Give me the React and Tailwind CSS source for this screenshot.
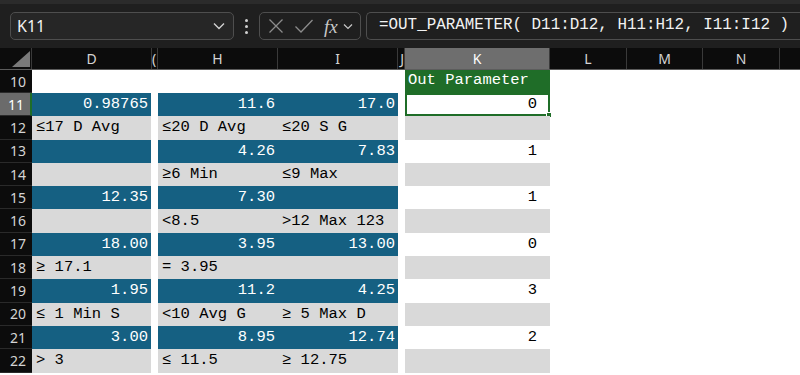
import React from 'react';

const MONO = { fontFamily: '"Liberation Mono", "DejaVu Sans Mono", monospace' };
const UI = { fontFamily: '"Noto Sans", "Open Sans", sans-serif' };

const rows = [
  { n: 11, d: '0.98765', h: '11.6', i: '17.0', k: '0' },
  { n: 12, d: '≤17 D Avg', h: '≤20 D Avg', i: '≤20 S G' },
  { n: 13, d: '', h: '4.26', i: '7.83', k: '1' },
  { n: 14, d: '', h: '≥6 Min', i: '≤9 Max' },
  { n: 15, d: '12.35', h: '7.30', i: '', k: '1' },
  { n: 16, d: '', h: '<8.5', i: '>12 Max 123' },
  { n: 17, d: '18.00', h: '3.95', i: '13.00', k: '0' },
  { n: 18, d: '≥ 17.1', h: '= 3.95', i: '' },
  { n: 19, d: '1.95', h: '11.2', i: '4.25', k: '3' },
  { n: 20, d: '≤ 1 Min S', h: '<10 Avg G', i: '≥ 5 Max D' },
  { n: 21, d: '3.00', h: '8.95', i: '12.74', k: '2' },
  { n: 22, d: '> 3', h: '≤ 11.5', i: '≥ 12.75' },
];

const cols = [
  { l: 'D', w: 'w-[120px]' },
  { l: 'G', w: 'w-[6px]', align: 'justify-start' },
  { l: 'H', w: 'w-[120px]' },
  { l: 'I', w: 'w-[120px]' },
  { l: 'J', w: 'w-[7px]', align: 'justify-end' },
  { l: 'K', w: 'w-[145px]', sel: true },
  { l: 'L', w: 'w-[77px]' },
  { l: 'M', w: 'w-[76px]' },
  { l: 'N', w: 'w-[77px]' },
  { l: '', w: 'w-[40px]' },
];

function RowHead({ n, sel }) {
  return (
    <div
      className={`w-[32px] shrink-0 h-full flex items-center justify-end pr-[6px] text-[14px] border-b border-[#2a2a2a] ${sel ? 'bg-[#6b6b6b] text-white border-r-2 border-r-[#1f6d28]' : 'bg-[#0c0c0c] text-[#d4d4d4]'}`}
      style={UI}
    >
      {n}
    </div>
  );
}

function Cell({ text, dark, w }) {
  const bg = dark ? 'bg-[#156082] text-white' : 'bg-[#d9d9d9] text-black';
  return (
    <div
      className={`${w} shrink-0 h-full flex items-center whitespace-nowrap overflow-hidden text-[15.5px] ${bg} ${dark ? 'justify-end pr-[3px]' : 'justify-start pl-[4px]'}`}
      style={MONO}
    >
      {text}
    </div>
  );
}

export default function App() {
  return (
    <div className="w-[800px] h-[375px] overflow-hidden bg-white relative">
      {/* formula bar */}
      <div className="h-[48px] bg-[#1f1f1f] border-t-[4px] border-[#2b2b2b] flex items-center pl-[10px]">
        <div className="w-[224px] h-[28px] rounded-[5px] border border-[#4e4e4e] bg-[#262626] flex items-center justify-between pl-[6px] pr-[8px]">
          <span className="text-[16px] text-[#f2f2f2]" style={UI}>K11</span>
          <svg width="12" height="8" viewBox="0 0 12 8">
            <path d="M1 1.5 L6 6.5 L11 1.5" stroke="#d0d0d0" strokeWidth="1.4" fill="none" />
          </svg>
        </div>
        <div className="w-[25px] flex flex-col items-center gap-[3px]">
          <div className="w-[3px] h-[3px] rounded-full bg-[#d0d0d0]" />
          <div className="w-[3px] h-[3px] rounded-full bg-[#d0d0d0]" />
          <div className="w-[3px] h-[3px] rounded-full bg-[#d0d0d0]" />
        </div>
        <div className="w-[102px] h-[28px] rounded-[5px] border border-[#4e4e4e] flex items-center pl-[8px]">
          <svg width="16" height="16" viewBox="0 0 16 16">
            <path d="M1.5 1.5 L14.5 14.5 M14.5 1.5 L1.5 14.5" stroke="#8c8c8c" strokeWidth="1.3" fill="none" />
          </svg>
          <svg width="20" height="16" viewBox="0 0 20 16" className="ml-[10px]">
            <path d="M1.5 8.5 L7 14 L18.5 2" stroke="#8c8c8c" strokeWidth="1.3" fill="none" />
          </svg>
          <span className="ml-[10px] text-[19px] italic text-[#c8c8c8] leading-none" style={{ fontFamily: '"Liberation Serif", "DejaVu Serif", serif' }}>fx</span>
          <svg width="10" height="7" viewBox="0 0 10 7" className="ml-[5px]">
            <path d="M1 1.5 L5 5.5 L9 1.5" stroke="#c8c8c8" strokeWidth="1.2" fill="none" />
          </svg>
        </div>
        <div className="ml-[5px] flex-1 h-[28px] rounded-l-[5px] border border-r-0 border-[#4e4e4e] flex items-center pl-[12px] overflow-hidden">
          <span className="text-[15.9px] text-[#f2f2f2] whitespace-nowrap" style={MONO}>
            =OUT_PARAMETER( D11:D12, H11:H12, I11:I12 )
          </span>
        </div>
      </div>

      {/* column headers */}
      <div className="h-[22px] flex bg-[#0c0c0c] border-b border-[#5c5c5c]">
        <div className="w-[32px] shrink-0 relative border-r border-[#3a3a3a]">
          <svg width="20" height="17" viewBox="0 0 20 17" className="absolute left-[11px] top-[3px]">
            <path d="M19 0 L19 16 L1 16 Z" fill="#7a7a7a" />
          </svg>
        </div>
        {cols.map((c, idx) => (
          <div
            key={idx}
            className={`${c.w} shrink-0 flex items-center ${c.align || 'justify-center'} overflow-hidden text-[14px] border-r border-[#3a3a3a] ${c.sel ? 'bg-[#6e6e6e] text-white' : 'text-[#d4d4d4]'}`}
            style={UI}
          >
            {c.align === 'justify-start' ? (
              <span className="w-[6px] overflow-hidden">{'('}</span>
            ) : (
              c.l
            )}
          </div>
        ))}
      </div>

      {/* row 10 */}
      <div className="h-[23px] flex">
        <RowHead n={10} />
        <div className="w-[120px] shrink-0" />
        <div className="w-[6px] shrink-0" />
        <div className="w-[240px] shrink-0" />
        <div className="w-[7px] shrink-0" />
        <div
          className="w-[145px] shrink-0 bg-[#1f6d28] text-white text-[15.5px] flex items-end pl-[3px] pb-[1px] whitespace-nowrap"
          style={MONO}
        >
          Out Parameter
        </div>
      </div>

      {rows.map((r) => {
        const dark = r.n % 2 === 1;
        return (
          <div key={r.n} className="h-[23.3px] flex">
            <RowHead n={r.n} sel={r.n === 11} />
            <Cell text={r.d} dark={dark} w="w-[119px]" />
            <div className="w-[7px] shrink-0" />
            <Cell text={r.h} dark={dark} w="w-[120px]" />
            <Cell text={r.i} dark={dark} w="w-[120px]" />
            <div className="w-[7px] shrink-0" />
            <div
              className={`w-[145px] shrink-0 h-full flex items-center justify-end text-[15.5px] text-black relative ${dark ? 'bg-white' : 'bg-[#d9d9d9]'} ${r.n === 11 ? 'border-2 border-[#1f6d28] pr-[11px]' : 'pr-[13px]'}`}
              style={MONO}
            >
              {r.k}
              {r.n === 11 && (
                <div className="absolute right-[-4px] bottom-[-4px] w-[6px] h-[6px] bg-[#1f6d28] border border-white" />
              )}
            </div>
          </div>
        );
      })}
    </div>
  );
}
